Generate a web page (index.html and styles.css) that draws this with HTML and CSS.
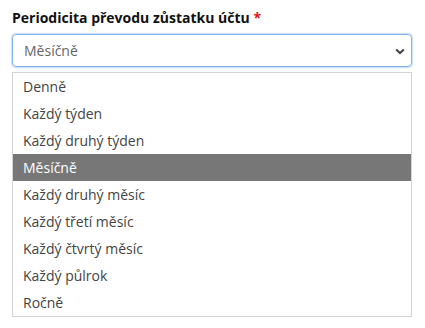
FILE: index.html
```html
<!DOCTYPE html>
<html lang="cs">
<head>
<meta charset="utf-8">
<link rel="stylesheet" href="styles.css">
</head>
<body>
<div class="field">
  <label class="label">Periodicita převodu zůstatku účtu <span class="req">*</span></label>
  <div class="select">
    <span class="value">Měsíčně</span>
    <svg class="chev" width="10" height="7" viewBox="0 0 10 7"><path d="M1.2 1.4 L5 5 L8.8 1.4" fill="none" stroke="#444" stroke-width="2"/></svg>
  </div>
  <ul class="list">
    <li>Denně</li>
    <li>Každý týden</li>
    <li>Každý druhý týden</li>
    <li class="sel">Měsíčně</li>
    <li>Každý druhý měsíc</li>
    <li>Každý třetí měsíc</li>
    <li>Každý čtvrtý měsíc</li>
    <li>Každý půlrok</li>
    <li>Ročně</li>
  </ul>
</div>
</body>
</html>
```
FILE: styles.css
```css
html, body { margin: 0; padding: 0; background: #fff; }
body { font-family: "Open Sans", "Noto Sans", sans-serif; }
.field { padding: 8px 13px 0 12px; display: flex; flex-direction: column; }
.label { font-weight: 700; font-size: 14px; line-height: 20px; color: #111; margin-bottom: 6px; }
.req { color: #e3131b; }
.select {
  height: 33px; box-sizing: border-box; border: 1px solid #7fb4ee; border-radius: 4px;
  box-shadow: 0 0 0 1px rgba(120,170,235,0.25), 0 0 3px rgba(100,160,230,0.35);
  display: flex; align-items: center; justify-content: space-between; padding: 0 6px 0 11px;
}
.value { font-size: 14px; color: #666; }
.chev { display: block; margin-top: 1px; }
.list { list-style: none; margin: 5px 0 0; padding: 0; border: 1px solid #d4d4d4; }
.list li { height: 27px; line-height: 27px; padding-left: 10px; font-size: 14px; color: #444; }
.list li.sel { background: #777; color: #fff; }
```
